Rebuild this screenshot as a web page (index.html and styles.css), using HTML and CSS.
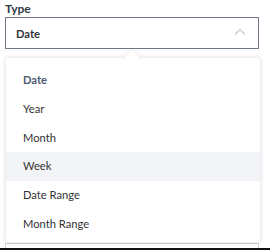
FILE: index.html
```html
<!DOCTYPE html>
<html lang="en">
<head>
  <meta charset="UTF-8">
  <meta name="viewport" content="width=device-width, initial-scale=1.0">
  <title>Type</title>
  <link rel="stylesheet" href="styles.css">
</head>
<body>
  <div class="form">
    <div class="field">
      <label class="field-label">Type</label>
      <div class="select open">
        <span class="select-value">Date</span>
        <svg class="chevron" width="12" height="8" viewBox="0 0 12 8">
          <path d="M1 6.5 L6 1.5 L11 6.5" fill="none" stroke="#c4c8cc" stroke-width="1.2"/>
        </svg>
        <!-- dropdown menu -->
        <ul class="menu">
          <li class="item selected">Date</li>
          <li class="item">Year</li>
          <li class="item">Month</li>
          <li class="item hover">Week</li>
          <li class="item">Date Range</li>
          <li class="item">Month Range</li>
        </ul>
      </div>
    </div>
    <div class="field next">
      <div class="select"></div>
    </div>
  </div>
</body>
</html>
```

FILE: styles.css
```css
html, body {
  margin: 0;
  padding: 0;
}
body {
  font-family: Lato, "Open Sans", sans-serif;
  font-size: 11.2px;
  color: #333;
  background: #fff;
  height: 250px;
  box-sizing: border-box;
  border-bottom: 2px solid #111;
  overflow: hidden;
}
.form {
  padding: 2px 11px 0 5px;
}
.field-label {
  display: block;
  font-weight: bold;
  font-size: 12px;
  line-height: 13px;
  color: #2f3a44;
  margin-bottom: 2px;
}
.select {
  position: relative;
  height: 30px;
  border: 1px solid #6e7b86;
  display: flex;
  align-items: center;
  justify-content: space-between;
  padding: 0 12px 0 10px;
}
.select-value {
  font-weight: bold;
  color: #333;
}
.chevron {
  margin-top: -2px;
}
.menu {
  position: absolute;
  top: 40px;
  left: 0;
  right: -2px;
  margin: 0;
  padding: 8px 0 0;
  list-style: none;
  background: #fff;
  border-radius: 3px;
  box-shadow: 0 0 5px rgba(0, 0, 0, 0.16);
  height: 176px;
  z-index: 2;
}
.menu::before {
  content: "";
  position: absolute;
  top: -6px;
  left: 121px;
  width: 10px;
  height: 10px;
  background: #fff;
  transform: rotate(45deg);
  box-shadow: -2px -2px 3px rgba(0, 0, 0, 0.06);
}
.item {
  position: relative;
  height: 28.8px;
  line-height: 28.8px;
  padding: 0 17px;
  color: #333;
}
.item.selected {
  font-weight: bold;
  color: #4b5a70;
}
.item.hover {
  background: #f3f4f8;
}
.field.next {
  margin-top: 194px;
}
.field.next .select {
  height: 4px;
  border-bottom: 0;
  border-color: #cfd3d6;
}
```
